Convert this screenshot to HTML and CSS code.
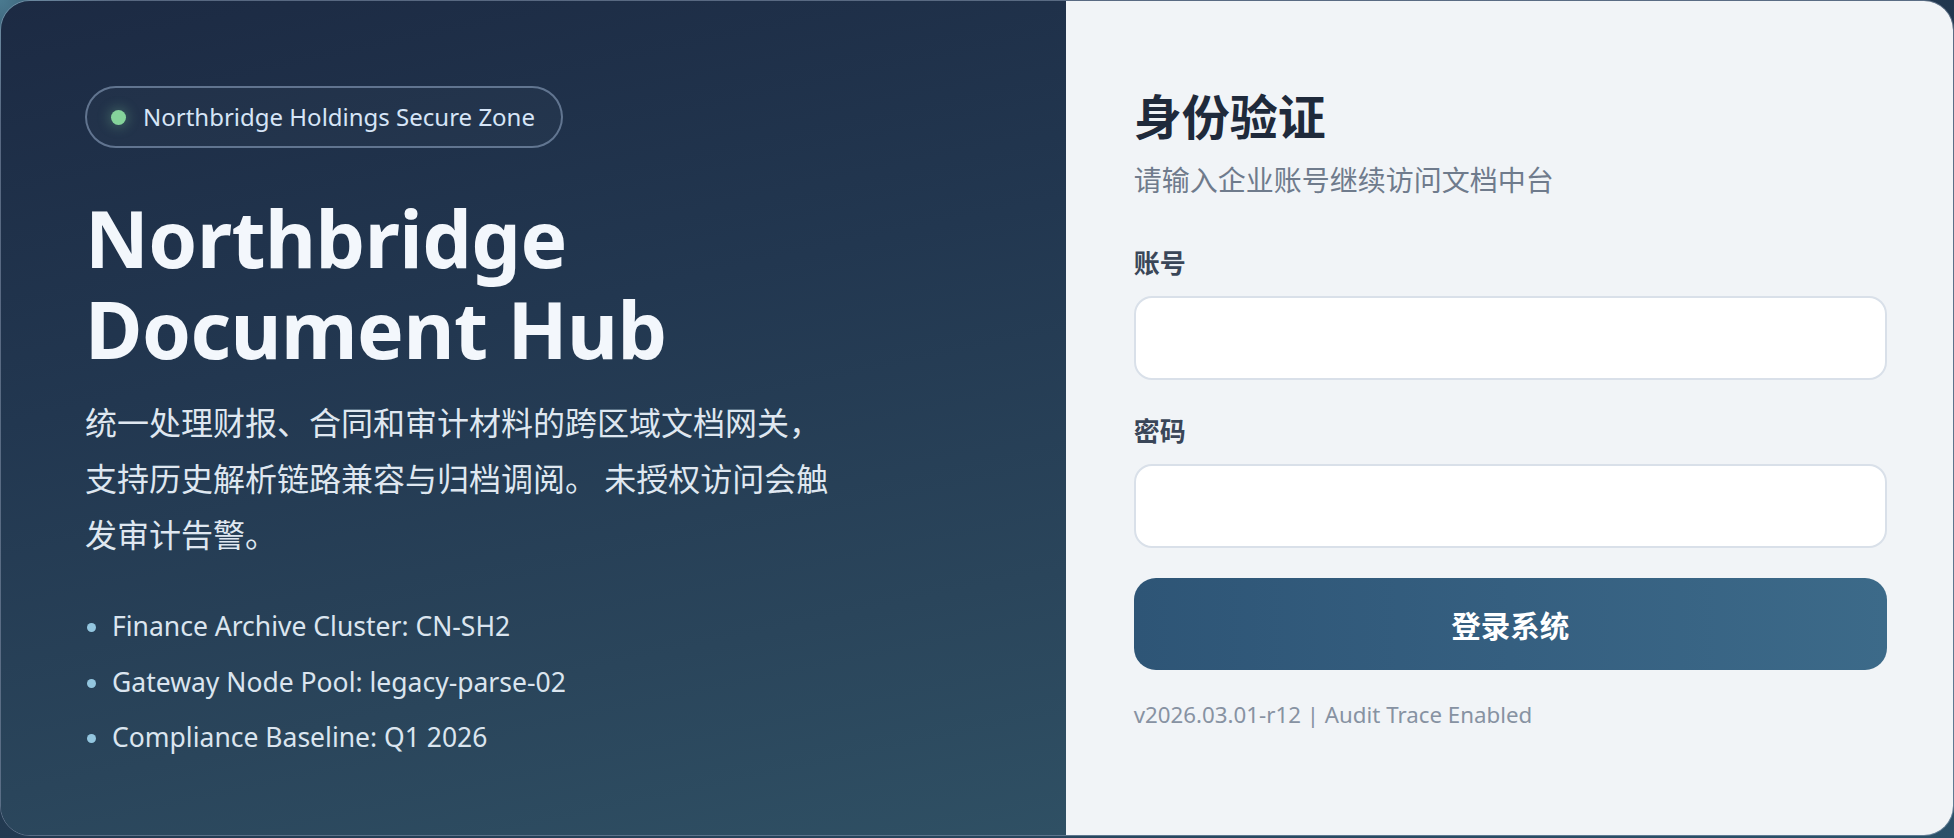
FILE: index.html
```html
<!DOCTYPE html>
<html lang="zh-CN">
<head>
<meta charset="utf-8">
<title>Northbridge Document Hub · 登录</title>
<link rel="stylesheet" href="styles.css">
</head>
<body>
  <main class="shell">
    <section class="intro">
      <div class="zone-pill">
        <span class="zone-dot"></span>
        <span class="zone-text">Northbridge Holdings Secure Zone</span>
      </div>
      <h1 class="hub-title">
        <span class="hub-title-line">Northbridge</span>
        <span class="hub-title-line">Document Hub</span>
      </h1>
      <p class="hub-desc">统一处理财报、合同和审计材料的跨区域文档网关，支持历史解析链路兼容与归档调阅。 未授权访问会触发审计告警。</p>
      <ul class="hub-facts">
        <li>Finance Archive Cluster: CN-SH2</li>
        <li>Gateway Node Pool: legacy-parse-02</li>
        <li>Compliance Baseline: Q1 2026</li>
      </ul>
    </section>

    <section class="auth">
      <h2 class="auth-title">身份验证</h2>
      <p class="auth-sub">请输入企业账号继续访问文档中台</p>
      <form class="auth-form" onsubmit="return false;">
        <label class="field">
          <span class="field-label">账号</span>
          <input class="field-input" type="text" name="account" autocomplete="username">
        </label>
        <label class="field">
          <span class="field-label">密码</span>
          <input class="field-input" type="password" name="password" autocomplete="current-password">
        </label>
        <button class="submit" type="submit">登录系统</button>
      </form>
      <p class="build-info">v2026.03.01-r12 | Audit Trace Enabled</p>
    </section>
  </main>
</body>
</html>
```

FILE: styles.css
```css
* {
  box-sizing: border-box;
}

html,
body {
  margin: 0;
  height: 100%;
}

body {
  font-family: "Noto Sans", "Noto Sans CJK SC", sans-serif;
  background:
    radial-gradient(circle at 0% 0%, #4a7a90 0, rgba(74, 122, 144, 0) 120px),
    linear-gradient(160deg, #1d2d46 0%, #22384f 50%, #2b5169 100%);
  overflow: hidden;
}

/* two-column card */
.shell {
  display: grid;
  grid-template-columns: 1.2fr 1fr;
  height: 836px;
  border: 1px solid rgba(160, 175, 200, 0.45);
  border-radius: 30px;
  overflow: hidden;
}

/* left: product intro */
.intro {
  display: flex;
  flex-direction: column;
  align-items: flex-start;
  padding: 85px 84px 0 84px;
  color: #e8eef6;
  background: linear-gradient(168deg, #1c2a43 0%, #223750 40%, #2a455b 75%, #2f5064 100%);
}

.zone-pill {
  display: flex;
  align-items: center;
  gap: 17px;
  height: 62px;
  padding: 0 26px 0 24px;
  border: 2px solid rgba(150, 172, 200, 0.55);
  border-radius: 31px;
  background: rgba(255, 255, 255, 0.02);
}

.zone-dot {
  width: 15px;
  height: 15px;
  border-radius: 50%;
  background: #85d39b;
  box-shadow: 0 0 12px 3px rgba(133, 211, 155, 0.25);
}

.zone-text {
  font-family: "Noto Sans", sans-serif;
  font-size: 24px;
  line-height: 30px;
  color: #d6e5f7;
}

.hub-title {
  display: flex;
  flex-direction: column;
  margin: 44px 0 0 0;
  font-family: "Noto Sans", sans-serif;
  font-weight: 700;
  font-size: 78.5px;
  line-height: 91px;
  letter-spacing: -0.5px;
  color: #f3f7fc;
}

.hub-title-line {
  display: block;
}

.hub-desc {
  margin: 19px 0 0 0;
  max-width: 765px;
  font-family: "Noto Sans CJK SC", sans-serif;
  font-size: 32px;
  line-height: 56px;
  color: #dfe7f0;
}

.hub-facts {
  margin: 48px 0 0 0;
  padding: 0 0 0 27px;
  font-family: "Noto Sans", sans-serif;
  font-size: 26.5px;
  line-height: 35px;
  color: #dbe5ef;
}

.hub-facts li {
  margin-bottom: 20.5px;
}

.hub-facts li::marker {
  color: #93c6df;
}

/* right: sign-in form */
.auth {
  display: flex;
  flex-direction: column;
  padding: 84px 66px 0 68px;
  background: #f1f4f7;
}

.auth-title {
  margin: 0;
  font-family: "Noto Sans CJK SC", sans-serif;
  font-weight: 700;
  font-size: 48px;
  line-height: 58px;
  color: #1f2a3b;
}

.auth-sub {
  margin: 16px 0 0 0;
  font-family: "Noto Sans CJK SC", sans-serif;
  font-size: 28px;
  line-height: 40px;
  color: #6f7b8c;
}

.auth-form {
  display: flex;
  flex-direction: column;
  margin-top: 46px;
}

.field {
  display: flex;
  flex-direction: column;
  gap: 16.5px;
  margin-bottom: 33.5px;
}

.field + .field {
  margin-bottom: 30.5px;
}

.field-label {
  font-family: "Noto Sans CJK SC", sans-serif;
  font-weight: 700;
  font-size: 26px;
  line-height: 34px;
  color: #3a4658;
}

.field-input {
  display: block;
  width: 100%;
  height: 84px;
  padding: 0 24px;
  border: 2px solid #d9e0e9;
  border-radius: 18px;
  background: #ffffff;
  font-size: 24px;
  outline: none;
}

.submit {
  height: 92px;
  border: 0;
  border-radius: 22px;
  background: linear-gradient(90deg, #2e5576 0%, #355f80 50%, #3c6a89 100%);
  font-family: "Noto Sans CJK SC", sans-serif;
  font-weight: 700;
  font-size: 29.5px;
  color: #ffffff;
  cursor: pointer;
}

.build-info {
  margin: 29px 0 0 0;
  font-family: "Noto Sans", sans-serif;
  font-size: 22.3px;
  line-height: 31px;
  color: #8792a2;
}
```
